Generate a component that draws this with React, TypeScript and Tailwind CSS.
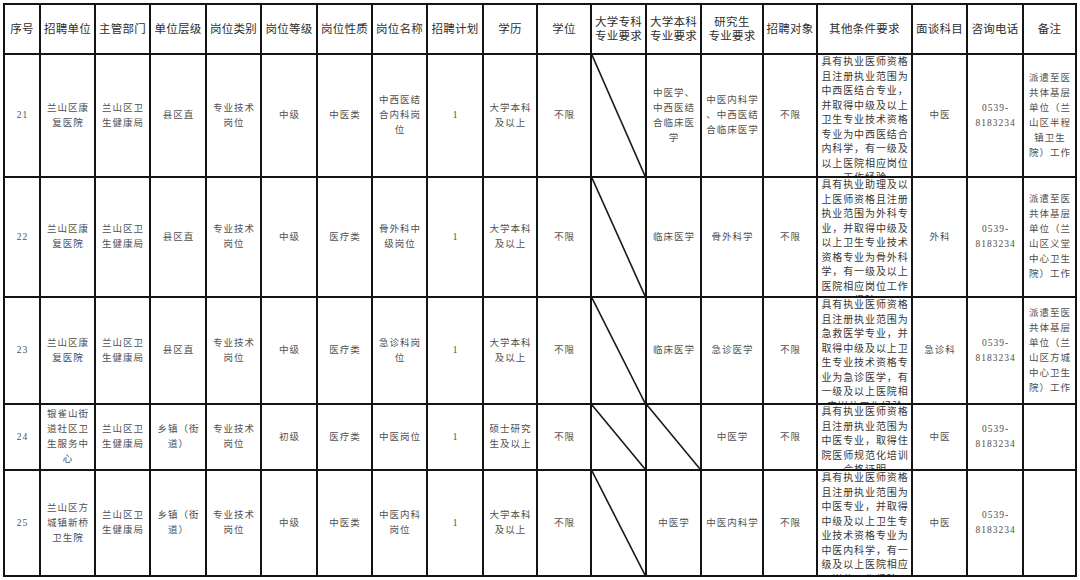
import React from "react";

type CellV = string | { t: "diag" } | { t: "other"; lines: string[] };

const D: CellV = { t: "diag" };
const O = (s: string): CellV => ({ t: "other", lines: s.split("/") });

const headers: string[] = [
  "序号",
  "招聘单位",
  "主管部门",
  "单位层级",
  "岗位类别",
  "岗位等级",
  "岗位性质",
  "岗位名称",
  "招聘计划",
  "学历",
  "学位",
  "大学专科/专业要求",
  "大学本科/专业要求",
  "研究生/专业要求",
  "招聘对象",
  "其他条件要求",
  "面谈科目",
  "咨询电话",
  "备注",
];

const rows: CellV[][] = [
  [
    "21",
    "兰山区康/复医院",
    "兰山区卫/生健康局",
    "县区直",
    "专业技术/岗位",
    "中级",
    "中医类",
    "中西医结/合内科岗/位",
    "1",
    "大学本科/及以上",
    "不限",
    D,
    "中医学、/中西医结/合临床医/学",
    "中医内科学/、中西医结/合临床医学",
    "不限",
    O("具有执业医师资格/且注册执业范围为/中西医结合专业，/并取得中级及以上/卫生专业技术资格/专业为中西医结合/内科学，有一级及/以上医院相应岗位/工作经验"),
    "中医",
    "0539-/8183234",
    "派遣至医/共体基层/单位（兰/山区半程/镇卫生/院）工作",
  ],
  [
    "22",
    "兰山区康/复医院",
    "兰山区卫/生健康局",
    "县区直",
    "专业技术/岗位",
    "中级",
    "医疗类",
    "骨外科中/级岗位",
    "1",
    "大学本科/及以上",
    "不限",
    D,
    "临床医学",
    "骨外科学",
    "不限",
    O("具有执业助理及以/上医师资格且注册/执业范围为外科专/业，并取得中级及/以上卫生专业技术/资格专业为骨外科/学，有一级及以上/医院相应岗位工作/经验"),
    "外科",
    "0539-/8183234",
    "派遣至医/共体基层/单位（兰/山区义堂/中心卫生/院）工作",
  ],
  [
    "23",
    "兰山区康/复医院",
    "兰山区卫/生健康局",
    "县区直",
    "专业技术/岗位",
    "中级",
    "医疗类",
    "急诊科岗/位",
    "1",
    "大学本科/及以上",
    "不限",
    D,
    "临床医学",
    "急诊医学",
    "不限",
    O("具有执业医师资格/且注册执业范围为/急救医学专业，并/取得中级及以上卫/生专业技术资格专/业为急诊医学，有/一级及以上医院相/应岗位工作经验"),
    "急诊科",
    "0539-/8183234",
    "派遣至医/共体基层/单位（兰/山区方城/中心卫生/院）工作",
  ],
  [
    "24",
    "银雀山街/道社区卫/生服务中/心",
    "兰山区卫/生健康局",
    "乡镇（街/道）",
    "专业技术/岗位",
    "初级",
    "医疗类",
    "中医岗位",
    "1",
    "硕士研究/生及以上",
    "不限",
    D,
    D,
    "中医学",
    "不限",
    O("具有执业医师资格/且注册执业范围为/中医专业，取得住/院医师规范化培训/合格证明"),
    "中医",
    "0539-/8183234",
    "",
  ],
  [
    "25",
    "兰山区方/城镇新桥/卫生院",
    "兰山区卫/生健康局",
    "乡镇（街/道）",
    "专业技术/岗位",
    "中级",
    "中医类",
    "中医内科/岗位",
    "1",
    "大学本科/及以上",
    "不限",
    D,
    "中医学",
    "中医内科学",
    "不限",
    O("具有执业医师资格/且注册执业范围为/中医专业，并取得/中级及以上卫生专/业技术资格专业为/中医内科学，有一/级及以上医院相应/岗位工作经验"),
    "中医",
    "0539-/8183234",
    "",
  ],
];

function Diagonal() {
  return (
    <svg
      className="absolute inset-0 h-full w-full"
      viewBox="0 0 100 100"
      preserveAspectRatio="none"
    >
      <line
        x1="0"
        y1="0"
        x2="100"
        y2="100"
        stroke="#1a1a1a"
        strokeWidth="1.6"
        vectorEffect="non-scaling-stroke"
      />
    </svg>
  );
}

function BodyCell({ v }: { v: CellV }) {
  if (typeof v === "string") {
    return (
      <div className="flex items-center justify-center overflow-hidden bg-white pl-[1px] text-center text-[9.5px] leading-[15px] tracking-[1px] text-[#505050]">
        <div>
          {v === ""
            ? null
            : v.split("/").map((l, i) => (
                <div key={i} className="whitespace-nowrap">
                  {l}
                </div>
              ))}
        </div>
      </div>
    );
  }
  if (v.t === "diag") {
    return (
      <div className="relative bg-white">
        <Diagonal />
      </div>
    );
  }
  return (
    <div className="overflow-hidden bg-white pl-[1px] text-center text-[10px] leading-[14.5px] tracking-[0.9px] text-[#383838]">
      {v.lines.map((l, i) => (
        <div key={i} className="whitespace-nowrap">
          {l}
        </div>
      ))}
    </div>
  );
}

export default function App() {
  return (
    <div
      className="h-[580px] w-[1080px] overflow-hidden bg-white"
      style={{ fontFamily: '"Liberation Serif", "Noto Sans CJK SC", serif' }}
    >
      <div className="ml-[3px] mt-[3px] grid w-fit grid-cols-[34px_53px_53px_54px_53px_54px_53px_53px_54px_52px_52px_53px_53px_60px_52px_93px_53px_54px_51px] grid-rows-[48px_121px_118px_105px_64px_104px] gap-[2px] bg-[#141414] p-[2px]">
        {headers.map((h, i) => (
          <div
            key={`h${i}`}
            className="flex items-center justify-center bg-white text-center text-[11.5px] leading-[14px] tracking-[0.3px] text-[#2e2e2e]"
          >
            <div>
              {h.split("/").map((l, j) => (
                <div key={j} className="whitespace-nowrap">
                  {l}
                </div>
              ))}
            </div>
          </div>
        ))}
        {rows.map((r, ri) =>
          r.map((c, ci) => <BodyCell key={`r${ri}c${ci}`} v={c} />)
        )}
      </div>
    </div>
  );
}
